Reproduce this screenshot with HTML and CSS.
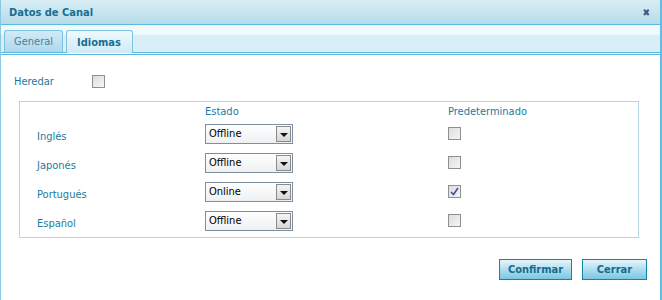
FILE: index.html
```html
<!DOCTYPE html>
<html>
<head>
<meta charset="utf-8">
<link rel="stylesheet" href="styles.css">
</head>
<body>
<div class="win">
  <div class="titlebar">
    <span class="title">Datos de Canal</span>
    <span class="close">&#x2716;</span>
  </div>
  <div class="tabstrip">
    <div class="tab">General</div>
    <div class="tab active">Idiomas</div>
  </div>
  <div class="body">
    <div class="inherit">
      <span class="lbl">Heredar</span>
      <span class="cb"></span>
    </div>
    <div class="box">
      <div class="grid">
        <div></div>
        <div class="hdr">Estado</div>
        <div class="hdr">Predeterminado</div>

        <div class="lang">Inglés</div>
        <div class="sel"><span class="val">Offline</span><span class="arr"></span></div>
        <div class="cbcell"><span class="cb"></span></div>

        <div class="lang">Japonés</div>
        <div class="sel"><span class="val">Offline</span><span class="arr"></span></div>
        <div class="cbcell"><span class="cb"></span></div>

        <div class="lang">Portugués</div>
        <div class="sel"><span class="val">Online</span><span class="arr"></span></div>
        <div class="cbcell"><span class="cb checked"><svg width="9" height="9" viewBox="0 0 9 9"><path d="M1 5 L3.5 7.5 L8 1" fill="none" stroke="#3a4f9a" stroke-width="1.6"/></svg></span></div>

        <div class="lang">Español</div>
        <div class="sel"><span class="val">Offline</span><span class="arr"></span></div>
        <div class="cbcell"><span class="cb"></span></div>
      </div>
    </div>
    <div class="actions">
      <button class="btn btn-confirm">Confirmar</button>
      <button class="btn btn-close">Cerrar</button>
    </div>
  </div>
</div>
</body>
</html>
```
FILE: styles.css
```css
html, body { margin: 0; padding: 0; background: #fff; }
body { font-family: Tahoma, "DejaVu Sans Condensed", "Liberation Sans", sans-serif; font-size: 11px; color: #1b7aa0; }
.win {
  width: 659px; height: 300px;
  border-left: 1px solid #8cc8e2;
  border-right: 2px solid #5fbde6;
  box-sizing: content-box;
}
.titlebar {
  height: 24px;
  background: linear-gradient(#d9eef5, #c3e3ee 60%, #b6dbe8);
  border-bottom: 1px solid #5db8e0;
  display: flex; align-items: center; justify-content: space-between;
  padding: 0 10px 0 8px;
}
.title { font-weight: bold; color: #156f94; font-size: 11px; }
.close { color: #3f5886; font-size: 10px; font-weight: bold; }
.tabstrip {
  height: 27px;
  background: linear-gradient(#eefafe, #eefafe 35%, #d9eef6 36%, #d9eef6);
  border-bottom: 1px solid #5db8e0;
  display: flex; align-items: flex-end; gap: 3px;
  padding-left: 3px;
  position: relative;
}
.tabstrip::after {
  content: ""; position: absolute; left: 0; right: 0; bottom: -3px; height: 1px; background: #5db8e0;
}
.tab {
  height: 22px; box-sizing: border-box;
  border: 1px solid #7cc3e2; border-bottom: none;
  border-radius: 3px 3px 0 0;
  padding: 0 9px; display: flex; align-items: center;
  color: #4d7f9e; font-size: 11px;
  background: linear-gradient(#d2ebf6, #aed8ec);
}
.tab.active {
  height: 23px; margin-bottom: -1px;
  background: linear-gradient(#eefafe, #cfeaf6);
  color: #156f94; font-weight: bold; padding: 0 11px 0 10px;
}
.body { padding: 21px 0 0 13px; }
.inherit { display: flex; align-items: center; height: 14px; }
.inherit .lbl { width: 78px; }
.cb {
  display: inline-flex; align-items: center; justify-content: center;
  width: 13px; height: 13px; box-sizing: border-box;
  border: 1px solid #8e8f8f;
  background: linear-gradient(135deg, #dcdcdc, #f6f6f6);
}
.cb.checked svg { display: block; }
.box {
  margin: 13px 0 0 5px;
  width: 620px; height: 137px; box-sizing: border-box;
  border: 1px solid #b6d7e6;
}
.grid {
  display: grid;
  grid-template-columns: 168px 243px auto;
  grid-template-rows: 16px repeat(4, 29px);
  padding: 1px 0 0 17px;
}
.hdr { align-self: center; }
.lang { align-self: center; padding-top: 6px; }
.cbcell { display: flex; align-items: center; }
.sel {
  align-self: center;
  width: 88px; height: 20px; box-sizing: border-box;
  border: 1px solid #7d8ea3;
  background: linear-gradient(#fff, #eef0f2);
  display: flex; align-items: stretch; justify-content: space-between;
  color: #000;
}
.sel .val { padding-left: 3px; display: flex; align-items: center; }
.arr {
  width: 15px; margin: 1px; box-sizing: border-box;
  border: 1px solid #8b8b8b;
  background: linear-gradient(#f5f5f5, #d6d6d6);
  position: relative;
}
.arr::after {
  content: ""; position: absolute; left: 3px; top: 6px;
  border-left: 4px solid transparent; border-right: 4px solid transparent; border-top: 4px solid #111;
}
.actions { display: flex; justify-content: flex-end; gap: 10px; padding: 21px 13px 0 0; }
.btn {
  height: 21px; box-sizing: border-box;
  border: 1px solid #0e86a8;
  background: linear-gradient(#e6f6fb, #a9dbee 55%, #7cc6e4);
  color: #176a8e; font-weight: bold; font-family: inherit; font-size: 11px;
  padding: 0; margin: 0;
}
.btn-confirm { width: 73px; }
.btn-close { width: 65px; }
```
